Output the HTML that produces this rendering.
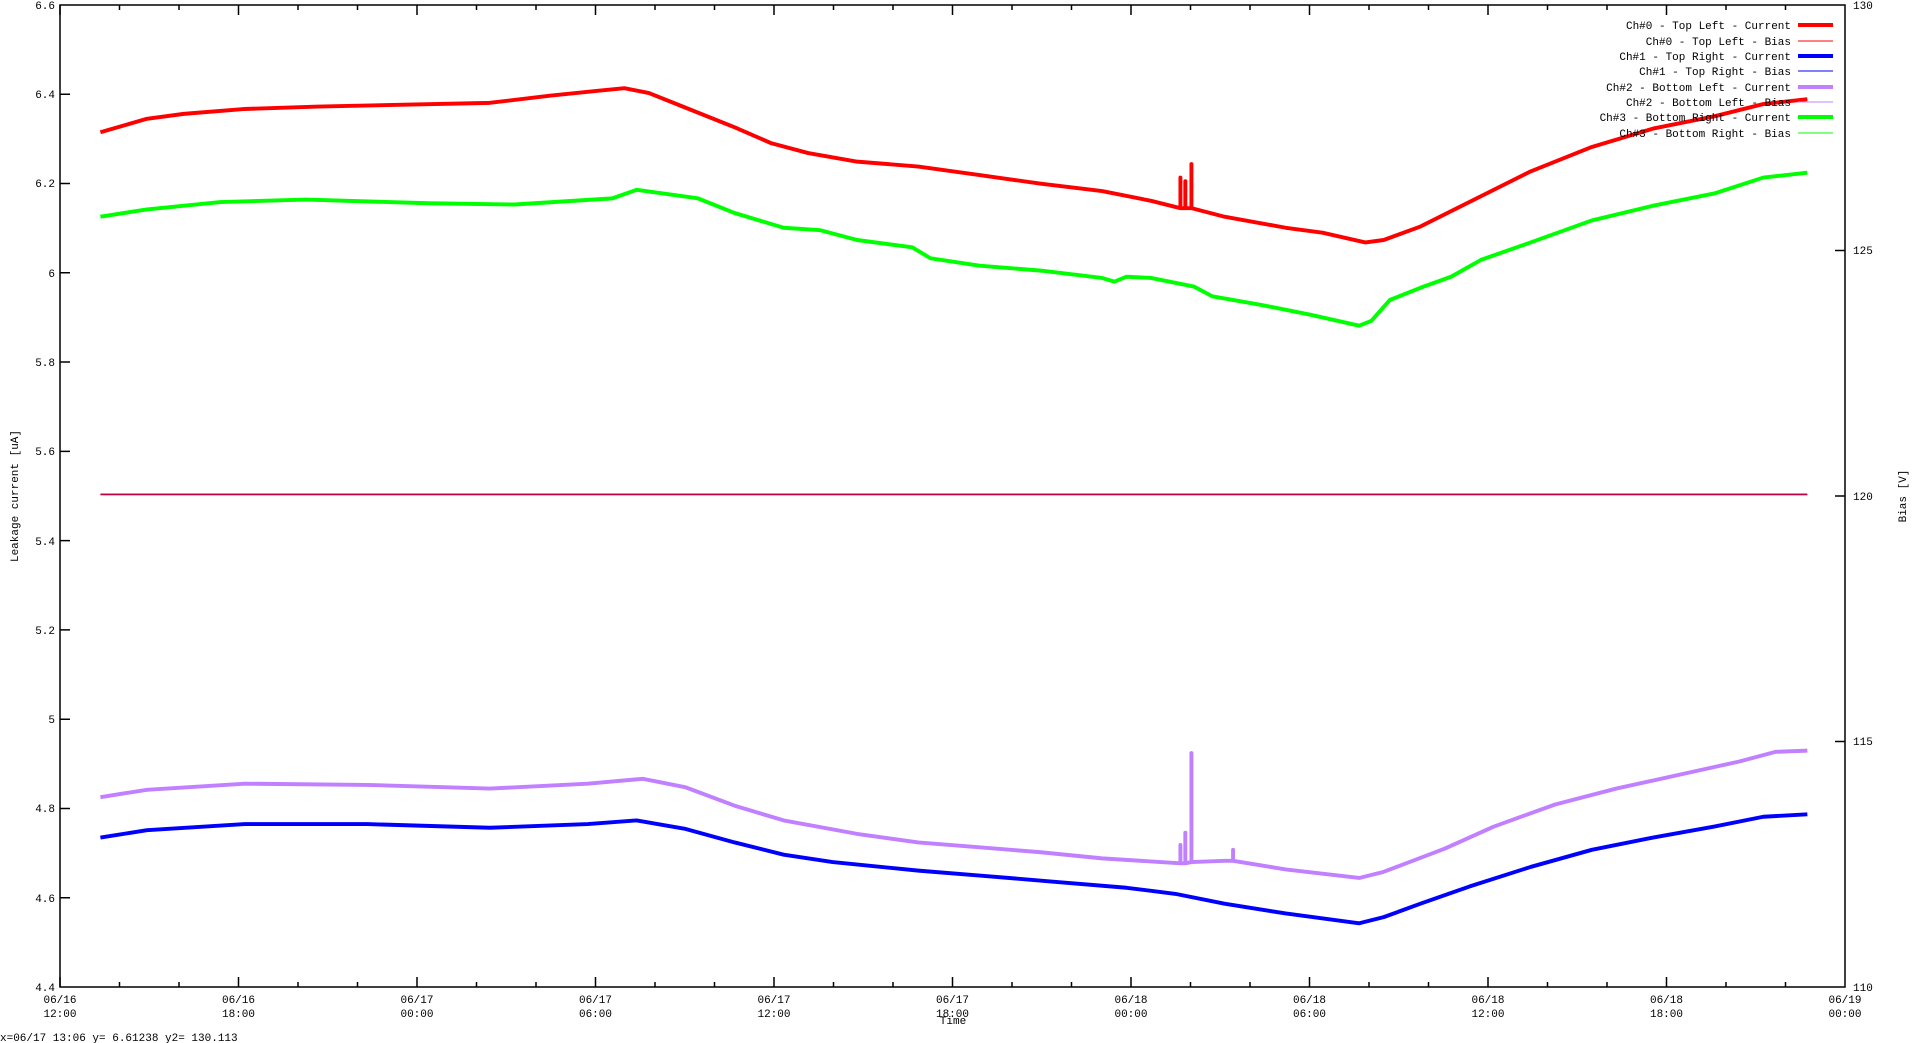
<!DOCTYPE html>
<html><head><meta charset="utf-8"><style>
html,body{margin:0;padding:0;background:#fff;width:1920px;height:1043px;overflow:hidden}
svg{display:block}
text{font-family:"Liberation Mono","DejaVu Sans Mono",monospace;font-size:11px;fill:#000}
</style></head><body>
<svg width="1920" height="1043" viewBox="0 0 1920 1043" xmlns="http://www.w3.org/2000/svg">
<g stroke="#000" stroke-width="1.5" fill="none">
<rect x="60" y="5" width="1785" height="982"/>
<!-- x ticks -->
<path d="M60,987v-10M238.5,987v-10M417,987v-10M595.5,987v-10M774,987v-10M952.5,987v-10M1131,987v-10M1309.5,987v-10M1488,987v-10M1666.5,987v-10
M60,5v10M238.5,5v10M417,5v10M595.5,5v10M774,5v10M952.5,5v10M1131,5v10M1309.5,5v10M1488,5v10M1666.5,5v10
M119.5,987v-5M179,987v-5M298,987v-5M357.5,987v-5M476.5,987v-5M536,987v-5M655,987v-5M714.5,987v-5M833.5,987v-5M893,987v-5M1012,987v-5M1071.5,987v-5M1190.5,987v-5M1250,987v-5M1369,987v-5M1428.5,987v-5M1547.5,987v-5M1607,987v-5M1726,987v-5M1785.5,987v-5
M119.5,5v5M179,5v5M298,5v5M357.5,5v5M476.5,5v5M536,5v5M655,5v5M714.5,5v5M833.5,5v5M893,5v5M1012,5v5M1071.5,5v5M1190.5,5v5M1250,5v5M1369,5v5M1428.5,5v5M1547.5,5v5M1607,5v5M1726,5v5M1785.5,5v5
M60,94.3h10M60,183.5h10M60,272.8h10M60,362h10M60,451.4h10M60,540.6h10M60,629.9h10M60,719.2h10M60,808.5h10M60,897.7h10
M1845,250.5h-10M1845,496h-10M1845,741.5h-10"/>
</g>
<g text-anchor="end">
<text x="55" y="9">6.6</text><text x="55" y="98">6.4</text><text x="55" y="187">6.2</text><text x="55" y="277">6</text><text x="55" y="366">5.8</text><text x="55" y="455">5.6</text><text x="55" y="545">5.4</text><text x="55" y="634">5.2</text><text x="55" y="723">5</text><text x="55" y="812">4.8</text><text x="55" y="902">4.6</text><text x="55" y="991">4.4</text>
</g>
<g>
<text x="1853" y="9">130</text><text x="1853" y="254">125</text><text x="1853" y="500">120</text><text x="1853" y="745">115</text><text x="1853" y="991">110</text>
</g>
<g text-anchor="middle">
<text x="60" y="1003">06/16</text><text x="60" y="1017">12:00</text>
<text x="238.5" y="1003">06/16</text><text x="238.5" y="1017">18:00</text>
<text x="417" y="1003">06/17</text><text x="417" y="1017">00:00</text>
<text x="595.5" y="1003">06/17</text><text x="595.5" y="1017">06:00</text>
<text x="774" y="1003">06/17</text><text x="774" y="1017">12:00</text>
<text x="952.5" y="1003">06/17</text><text x="952.5" y="1017">18:00</text>
<text x="1131" y="1003">06/18</text><text x="1131" y="1017">00:00</text>
<text x="1309.5" y="1003">06/18</text><text x="1309.5" y="1017">06:00</text>
<text x="1488" y="1003">06/18</text><text x="1488" y="1017">12:00</text>
<text x="1666.5" y="1003">06/18</text><text x="1666.5" y="1017">18:00</text>
<text x="1845" y="1003">06/19</text><text x="1845" y="1017">00:00</text>
<text x="953" y="1024">Time</text>
<text transform="translate(18,496) rotate(-90)">Leakage current [uA]</text>
<text transform="translate(1906,496) rotate(-90)">Bias [V]</text>
</g>
<text x="0" y="1041">x=06/17 13:06 y= 6.61238 y2= 130.113</text>
<!-- data -->
<g transform="scale(1.2245)" fill="none" stroke-linejoin="round">
<path d="M82,404H1476" stroke="#00f" stroke-width="1"/>
<path d="M82,403.5H1476" stroke="#f00" stroke-width="1"/>
<path stroke="#f00" stroke-width="3.2" d="M82,108L120,97L150,93L200,89L260,87L400,84L450,78L490,74L510,72L530,76L560,88L600,104L630,117L660,125L700,132L750,136L800,143L850,150L900,156L940,164L964,170V145V170L968,170V148V170L973,170V134V170L1000,177L1050,186L1080,190L1115,198L1130,196L1160,185L1200,165L1250,140L1300,120L1350,105L1400,95L1440,85L1476,81"/>
<path stroke="#0f0" stroke-width="3.2" d="M82,177L120,171L180,165L250,163L350,166L420,167L500,162L520,155L570,162L600,174L640,186L670,188L700,196L745,202L760,211L800,217L850,221L900,227L910,230L920,226L940,227L975,234L990,242L1030,249L1070,257L1110,266L1120,262L1135,245L1160,235L1185,226L1210,212L1250,198L1300,180L1350,168L1400,158L1440,145L1476,141"/>
<path stroke="#c080ff" stroke-width="3.2" d="M82,651L120,645L200,640L300,641L400,644L480,640L525,636L560,643L600,658L640,670L700,681L750,688L800,692L850,696L900,701L964,705V690V705L968,705V680V705L973,704V615V704L1000,703L1007,703V694V703L1050,710L1110,717L1130,712L1180,693L1220,675L1270,657L1320,644L1370,633L1420,622L1450,614L1476,613"/>
<path stroke="#00f" stroke-width="3.2" d="M82,684L120,678L200,673L300,673L400,676L480,673L520,670L560,677L600,688L640,698L680,704L750,711L800,715L860,720L920,725L960,730L1000,738L1050,746L1110,754L1130,749L1160,738L1200,724L1250,708L1300,694L1350,684L1400,675L1440,667L1476,665"/>
</g>
<!-- legend -->
<g text-anchor="end">
<text x="1791" y="29">Ch#0 - Top Left - Current</text>
<text x="1791" y="45">Ch#0 - Top Left - Bias</text>
<text x="1791" y="60">Ch#1 - Top Right - Current</text>
<text x="1791" y="75">Ch#1 - Top Right - Bias</text>
<text x="1791" y="91">Ch#2 - Bottom Left - Current</text>
<text x="1791" y="106">Ch#2 - Bottom Left - Bias</text>
<text x="1791" y="121">Ch#3 - Bottom Right - Current</text>
<text x="1791" y="137">Ch#3 - Bottom Right - Bias</text>
</g>
<g>
<path d="M1798,25h35" stroke="#f00" stroke-width="4"/>
<path d="M1798,41h35" stroke="#f00" stroke-width="1"/>
<path d="M1798,56h35" stroke="#00f" stroke-width="4"/>
<path d="M1798,71h35" stroke="#00f" stroke-width="1"/>
<path d="M1798,87h35" stroke="#c080ff" stroke-width="4"/>
<path d="M1798,102h35" stroke="#c080ff" stroke-width="1"/>
<path d="M1798,117h35" stroke="#0f0" stroke-width="4"/>
<path d="M1798,133h35" stroke="#0f0" stroke-width="1"/>
</g>
</svg>
</body></html>
